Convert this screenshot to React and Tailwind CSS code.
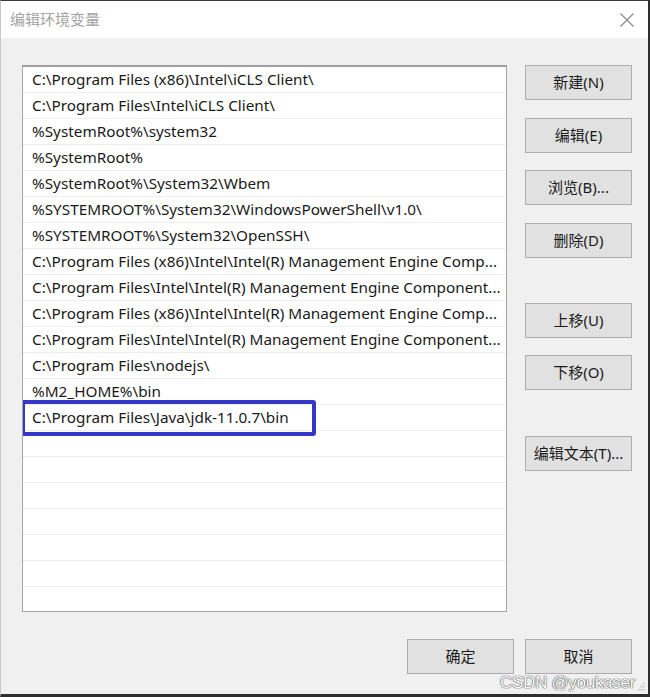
import React from "react";

const rows = [
  "C:\\Program Files (x86)\\Intel\\iCLS Client\\",
  "C:\\Program Files\\Intel\\iCLS Client\\",
  "%SystemRoot%\\system32",
  "%SystemRoot%",
  "%SystemRoot%\\System32\\Wbem",
  "%SYSTEMROOT%\\System32\\WindowsPowerShell\\v1.0\\",
  "%SYSTEMROOT%\\System32\\OpenSSH\\",
  "C:\\Program Files (x86)\\Intel\\Intel(R) Management Engine Comp...",
  "C:\\Program Files\\Intel\\Intel(R) Management Engine Component...",
  "C:\\Program Files (x86)\\Intel\\Intel(R) Management Engine Comp...",
  "C:\\Program Files\\Intel\\Intel(R) Management Engine Component...",
  "C:\\Program Files\\nodejs\\",
  "%M2_HOME%\\bin",
  "C:\\Program Files\\Java\\jdk-11.0.7\\bin",
  "", "", "", "", "", "", "", "",
];

function Btn({ children, className = "" }) {
  return (
    <div
      className={
        "w-[107px] h-[35px] flex items-center justify-center bg-[#e1e1e1] border border-[#adadad] text-[15px] text-[#1a1a1a] " +
        className
      }
    >
      {children}
    </div>
  );
}

export default function App() {
  return (
    <div
      className="w-[650px] h-[697px] flex flex-col bg-[#f0f0f0] border-t border-t-[#3a3a3a] border-l border-l-[#c8c8c8] border-r-2 border-r-[#2e2e2e] border-b-[3px] border-b-[#2e2e2e] overflow-hidden relative"
      style={{ fontFamily: '"Noto Sans", "Noto Sans CJK SC", sans-serif' }}
    >
      {/* title bar */}
      <div className="h-[37px] bg-white flex items-center justify-between pl-[9px] pr-[12px] shrink-0">
        <span className="text-[15px] text-[#a3a3a3]">编辑环境变量</span>
        <svg width="16" height="16" viewBox="0 0 16 16" className="mr-[1px]">
          <path d="M1.5 1.5 L14.5 14.5 M14.5 1.5 L1.5 14.5" stroke="#8a8a8a" strokeWidth="1.2" fill="none" />
        </svg>
      </div>

      {/* body */}
      <div className="flex flex-1 pt-[27px] pl-[21px]">
        {/* list */}
        <div className="relative w-[485px] h-[547px] bg-white border border-[#a5a5a5] border-t-2 border-t-[#a0a0a0] overflow-hidden">
          {rows.map((r, i) => (
            <div
              key={i}
              className="h-[26px] border-b border-[#eeeeee] pl-[9px] flex items-center text-[15.3px] text-[#1a1a1a] whitespace-nowrap leading-none"
            >
              {r}
            </div>
          ))}
          <div className="absolute left-[-2px] top-[333px] w-[295px] h-[36px] border-4 border-[#3537c8] rounded-[3px]" />
        </div>

        {/* right buttons */}
        <div className="flex flex-col ml-[18px]">
          <Btn>新建(N)</Btn>
          <Btn className="mt-[18px]">编辑(E)</Btn>
          <Btn className="mt-[17px]">浏览(B)...</Btn>
          <Btn className="mt-[18px]">删除(D)</Btn>
          <Btn className="mt-[45px]">上移(U)</Btn>
          <Btn className="mt-[17px]">下移(O)</Btn>
          <Btn className="mt-[46px]">编辑文本(T)...</Btn>
        </div>
      </div>

      {/* bottom buttons */}
      <div className="flex justify-end gap-[11px] pr-[16px] pb-[20px] shrink-0">
        <Btn>确定</Btn>
        <Btn>取消</Btn>
      </div>

      {/* watermark */}
      <div
        className="absolute right-[13px] bottom-[3px] text-[17px] text-white leading-none tracking-[-0.3px] [text-shadow:0_0_1px_#555,0_0_1px_#555,0_0_1px_#555]"
        style={{ fontFamily: '"Liberation Sans", Arial, sans-serif' }}
      >
        CSDN @youkaser
      </div>
      <svg className="absolute right-[2px] bottom-[2px]" width="8" height="10" viewBox="0 0 8 10">
        <rect x="5" y="1" width="1.5" height="1.5" fill="#bbb" />
        <rect x="2.5" y="4" width="1.5" height="1.5" fill="#bbb" />
        <rect x="5" y="4" width="1.5" height="1.5" fill="#bbb" />
        <rect x="0" y="7" width="1.5" height="1.5" fill="#bbb" />
        <rect x="2.5" y="7" width="1.5" height="1.5" fill="#bbb" />
        <rect x="5" y="7" width="1.5" height="1.5" fill="#bbb" />
      </svg>
    </div>
  );
}
